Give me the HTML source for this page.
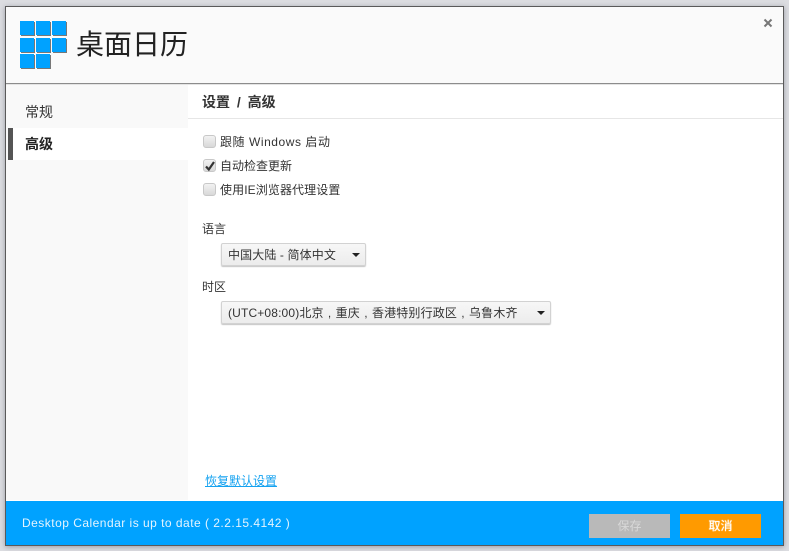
<!DOCTYPE html>
<html><head><meta charset="utf-8">
<style>
*{box-sizing:border-box}
html,body{margin:0;padding:0}
body{width:789px;height:551px;overflow:hidden;position:relative;background:#dcdde1;font-family:"Liberation Sans","Noto Sans CJK SC",sans-serif;color:#333;font-size:12px}
.a{position:absolute;white-space:nowrap}
#win{left:5px;top:6px;width:779px;height:540px;background:#fff;border:1px solid #5a5a5a;box-shadow:0 1px 5px rgba(110,110,125,.6)}
.sq{position:absolute;width:14px;height:14px;background:#00a2ff;box-shadow:1px 1px 0 #777}
.cb{position:absolute;left:203px;width:13px;height:13px;border:1px solid #c8c8c8;border-radius:3px;background:linear-gradient(#f2f2f2,#d8d8d8)}
.sel{position:absolute;left:221px;height:23px;border:1px solid #d2d2d2;border-radius:2px;background:linear-gradient(#f7f7f7,#ececec);box-shadow:0 1px 1px #c4c4c4;font-size:12px;line-height:22px;padding-left:6px;color:#333;white-space:nowrap}
.sel i{position:absolute;top:9px;right:5px;width:0;height:0;border-left:4.5px solid transparent;border-right:4.5px solid transparent;border-top:4.5px solid #222}
.sel b{display:inline-block;width:12px;text-align:center;font-weight:normal}
.btn{position:absolute;top:514px;width:81px;height:24px;text-align:center;line-height:24px;color:#fff;font-size:12px}
</style></head><body>
<div class="a" id="win"></div>
<div class="a" style="left:6px;top:7px;width:777px;height:76px;background:#fafafa"></div>
<div class="a" style="left:6px;top:83px;width:777px;height:1px;background:#8c8c8c"></div>
<div class="a" style="left:6px;top:84px;width:777px;height:1px;background:#e4e4e4"></div>
<div class="sq" style="left:20px;top:21px"></div><div class="sq" style="left:36px;top:21px"></div><div class="sq" style="left:52px;top:21px"></div>
<div class="sq" style="left:20px;top:38px"></div><div class="sq" style="left:36px;top:38px"></div><div class="sq" style="left:52px;top:38px"></div>
<div class="sq" style="left:20px;top:54px"></div><div class="sq" style="left:36px;top:54px"></div>
<div class="a" style="left:76px;top:27px;font-size:28px;line-height:36px;color:#222">桌面日历</div>
<svg class="a" style="left:763px;top:18px" width="10" height="10" viewBox="0 0 10 10"><path d="M1.5 1.5L8.5 8.5M8.5 1.5L1.5 8.5" stroke="#777" stroke-width="2"/></svg>

<div class="a" style="left:6px;top:85px;width:182px;height:415px;background:#f9f9f9"></div>
<div class="a" style="left:8px;top:128px;width:180px;height:32px;background:#fff"></div>
<div class="a" style="left:8px;top:128px;width:5px;height:32px;background:#555"></div>
<div class="a" style="left:25px;top:102px;font-size:14px;line-height:20px;color:#333">常规</div>
<div class="a" style="left:25px;top:134px;font-size:14px;line-height:20px;font-weight:bold;color:#222">高级</div>

<div class="a" style="left:202px;top:92px;font-size:14px;line-height:20px;font-weight:bold;color:#333;word-spacing:3px">设置 / 高级</div>
<div class="a" style="left:188px;top:118px;width:595px;height:1px;background:#e6e6e6"></div>

<div class="cb" style="top:135px"></div>
<div class="a" style="left:220px;top:134px;line-height:17px;letter-spacing:.55px">跟随 Windows 启动</div>
<div class="cb" style="top:159px"></div>
<svg class="a" style="left:204px;top:160px" width="12" height="12" viewBox="0 0 12 12"><path d="M2 6.5L4.8 9.5L10 2" fill="none" stroke="#333" stroke-width="2.2"/></svg>
<div class="a" style="left:220px;top:158px;line-height:17px">自动检查更新</div>
<div class="cb" style="top:183px"></div>
<div class="a" style="left:220px;top:182px;line-height:17px;letter-spacing:.1px">使用IE浏览器代理设置</div>

<div class="a" style="left:202px;top:221px;line-height:17px">语言</div>
<div class="sel" style="top:243px;width:145px;letter-spacing:.12px">中国大陆 - 简体中文<i></i></div>
<div class="a" style="left:202px;top:279px;line-height:17px">时区</div>
<div class="sel" style="top:301px;width:330px;letter-spacing:.15px">(UTC+08:00)北京<b>,</b>重庆<b>,</b>香港特别行政区<b>,</b>乌鲁木齐<i></i></div>

<div class="a" style="left:205px;top:473px;line-height:17px;color:#14a2f0;text-decoration:underline">恢复默认设置</div>

<div class="a" style="left:6px;top:501px;width:777px;height:44px;background:#00a2ff"></div>
<div class="a" style="left:22px;top:515px;line-height:16px;color:#e4f4ff;letter-spacing:.48px">Desktop Calendar is up to date ( 2.2.15.4142 )</div>
<div class="btn" style="left:589px;background:#b9b9b9;color:#d8d8d8">保存</div>
<div class="btn" style="left:680px;background:#ff9a00;text-shadow:0 0 1px #fff">取消</div>
</body></html>
